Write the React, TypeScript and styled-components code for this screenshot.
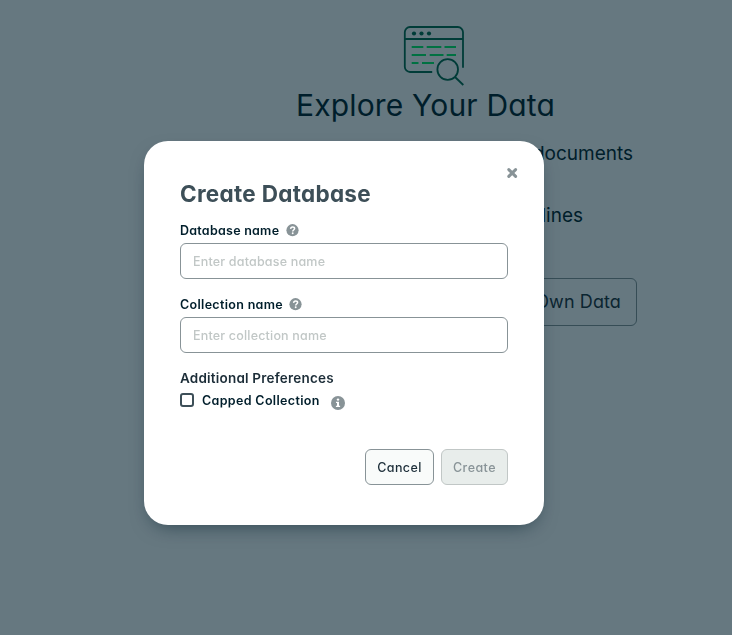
import React from "react";
import styled, { createGlobalStyle } from "styled-components";

const GlobalStyle = createGlobalStyle`
  *, *::before, *::after { box-sizing: border-box; }
  body {
    margin: 0;
    background: #667880;
    color: #001e2b;
    font-family: Inter, "Liberation Sans", sans-serif;
    font-feature-settings: "cv11" 1;
    overflow: hidden;
  }
  input, button { font: inherit; font-feature-settings: inherit; }
`;

/* Page behind the dialog */

const Page = styled.main`
  width: 424px;
  margin-left: 213px;
  padding-top: 25px;
  display: flex;
  flex-direction: column;
`;

const Illustration = styled.svg`
  display: block;
  width: 62px;
  height: 62px;
  margin-left: 190px;
  flex: none;
`;

const PageTitle = styled.h1`
  margin: 0;
  padding-left: 1px;
  font-size: 30px;
  font-weight: 400;
  line-height: 36px;
  letter-spacing: 0.16px;
  text-align: center;
`;

const Blurb = styled.p<{ $top: number; $end: number }>`
  margin: ${(p) => p.$top}px 0 0;
  padding-right: ${(p) => p.$end}px;
  font-size: 19px;
  line-height: 24px;
  text-align: right;
`;

const PageButton = styled.button`
  align-self: flex-end;
  margin-top: 50px;
  height: 48px;
  padding: 0 15px 1px 24px;
  border: 1px solid #364d56;
  border-radius: 6px;
  background: transparent;
  color: #0b2531;
  font-size: 18px;
  letter-spacing: 0.1px;
`;

/* Dialog */

const Backdrop = styled.div`
  position: fixed;
  inset: 0;
  display: flex;
  justify-content: center;
  align-items: flex-start;
  padding: 141px 44px 0 0;
`;

const Dialog = styled.section`
  width: 400px;
  height: 384px;
  padding: 25px 36px 0;
  border-radius: 24px;
  background: #fff;
  box-shadow: 0 8px 20px -8px rgba(0, 30, 43, 0.6);
  display: flex;
  flex-direction: column;
`;

const CloseButton = styled.button`
  align-self: flex-end;
  width: 14px;
  height: 14px;
  margin-right: -11px;
  padding: 0;
  border: 0;
  background: none;
  color: #889397;
  svg { display: block; }
`;

const DialogTitle = styled.h2`
  margin: 0;
  font-size: 22.5px;
  font-weight: 700;
  line-height: 28px;
  letter-spacing: 0.29px;
  color: #3d4f58;
`;

const Field = styled.div<{ $top: number }>`
  margin-top: ${(p) => p.$top}px;
`;

const LabelRow = styled.div<{ $gap: number }>`
  display: flex;
  align-items: center;
  gap: ${(p) => p.$gap}px;
  height: 20px;
  color: #889397;
`;

const Label = styled.label<{ $tracking: number }>`
  padding-top: 2px;
  color: #001e2b;
  font-size: 12.5px;
  font-weight: 600;
  line-height: 20px;
  letter-spacing: ${(p) => p.$tracking}px;
`;

const TextInput = styled.input`
  display: block;
  width: 100%;
  height: 36px;
  margin-top: 3px;
  padding: 0 12px;
  border: 1px solid #889397;
  border-radius: 6px;
  background: #fff;
  color: #001e2b;
  font-size: 12.5px;
  font-weight: 500;
  letter-spacing: 0.19px;
  outline: none;
  &::placeholder { color: #c1c7c6; opacity: 1; }
`;

const Preferences = styled.h3`
  margin: 15px 0 0;
  color: #1c2d38;
  font-size: 13.5px;
  font-weight: 600;
  line-height: 20px;
  letter-spacing: 0.2px;
`;

const CheckRow = styled.div`
  display: flex;
  align-items: center;
  height: 20px;
  margin-top: 2px;
  color: #889397;
`;

const Checkbox = styled.input`
  appearance: none;
  width: 14px;
  height: 14px;
  margin: 0 8px 0 0;
  border: 2px solid #3d4f58;
  border-radius: 3px;
  background: #fff;
`;

const InfoSlot = styled.span`
  display: block;
  margin: 5px 0 0 11px;
  height: 14px;
  svg { display: block; }
`;

const Actions = styled.div`
  display: flex;
  justify-content: flex-end;
  gap: 7px;
  margin-top: 39px;
`;

const ActionButton = styled.button<{ $width: number; $tracking: number }>`
  width: ${(p) => p.$width}px;
  height: 36px;
  padding: 0;
  border: 1px solid #889397;
  border-radius: 6px;
  background: #f9fbfa;
  color: #1c2d38;
  font-size: 12.5px;
  font-weight: 450;
  letter-spacing: ${(p) => p.$tracking}px;
  &:disabled {
    border-color: #c1c7c6;
    background: #e8edeb;
    color: #889397;
    font-weight: 500;
  }
`;

function HelpIcon() {
  return (
    <svg width="13" height="13" viewBox="0 0 13 13" aria-hidden="true">
      <circle cx="6.5" cy="6.2" r="6.1" fill="currentColor" />
      <path d="M4.6 4.9C4.7 3.6 5.5 3 6.6 3c1.2 0 2 .7 2 1.6 0 1.4-1.9 1.4-1.9 2.8" fill="none" stroke="#fff" strokeWidth="1.5" />
      <circle cx="6.7" cy="9.3" r="0.95" fill="#fff" />
    </svg>
  );
}

function InfoIcon() {
  return (
    <svg width="14" height="14" viewBox="0 0 14 14" aria-hidden="true">
      <circle cx="7" cy="7" r="7" fill="currentColor" />
      <circle cx="7" cy="3.6" r="1.2" fill="#fff" />
      <path d="M5 5.7h3v4h1.1v1.2H4.9V9.7H6V6.9H5z" fill="#fff" />
    </svg>
  );
}

function DataIllustration() {
  return (
    <Illustration viewBox="403 25 62 62" fill="none" aria-hidden="true">
      <g stroke="#003c38" strokeWidth="1.8">
        <path d="M432.2 72H410a5.2 5.2 0 0 1-5.2-5.2V32.2A5.2 5.2 0 0 1 410 27h47.8a5.2 5.2 0 0 1 5.2 5.2v35.6" />
        <path d="M405 39h58" />
        <circle cx="447.7" cy="69.5" r="10.3" />
        <path d="M455 77l8.3 8" />
      </g>
      <g fill="#003c38">
        <circle cx="414" cy="33.5" r="2.1" />
        <circle cx="421.5" cy="33.5" r="2.1" />
        <circle cx="429" cy="33.5" r="2.1" />
      </g>
      <path
        d="M411.7 47h11.6M426.7 47h14.6M444.5 47H456M411.7 55H426M429.7 55h13.8M446.7 55H456M411.7 63h6.8M422 63h12"
        stroke="#007142"
        strokeWidth="1.8"
      />
    </Illustration>
  );
}

export default function App() {
  return (
    <>
      <GlobalStyle />
      <Page>
        <DataIllustration />
        <PageTitle>Explore Your Data</PageTitle>
        <Blurb $top={19} $end={4}>documents</Blurb>
        <Blurb $top={38} $end={54}>lines</Blurb>
        <PageButton>Own Data</PageButton>
      </Page>
      <Backdrop>
        <Dialog role="dialog" aria-labelledby="dialog-title">
          <CloseButton aria-label="Close">
            <svg width="14" height="14" viewBox="0 0 14 14" aria-hidden="true">
              <path d="M3.8 3.6l6.8 6.8M10.6 3.6l-6.8 6.8" stroke="currentColor" strokeWidth="3" strokeLinecap="round" />
            </svg>
          </CloseButton>
          <DialogTitle id="dialog-title">Create Database</DialogTitle>
          <Field $top={12}>
            <LabelRow $gap={6.5}>
              <Label htmlFor="database" $tracking={0.25}>Database name</Label>
              <HelpIcon />
            </LabelRow>
            <TextInput id="database" placeholder="Enter database name" />
          </Field>
          <Field $top={15}>
            <LabelRow $gap={6}>
              <Label htmlFor="collection" $tracking={0.32}>Collection name</Label>
              <HelpIcon />
            </LabelRow>
            <TextInput id="collection" placeholder="Enter collection name" />
          </Field>
          <Preferences>Additional Preferences</Preferences>
          <CheckRow>
            <Checkbox type="checkbox" id="capped" />
            <Label htmlFor="capped" $tracking={0.34}>Capped Collection</Label>
            <InfoSlot><InfoIcon /></InfoSlot>
          </CheckRow>
          <Actions>
            <ActionButton $width={69} $tracking={0.43}>Cancel</ActionButton>
            <ActionButton $width={67} $tracking={0.45} disabled>Create</ActionButton>
          </Actions>
        </Dialog>
      </Backdrop>
    </>
  );
}
